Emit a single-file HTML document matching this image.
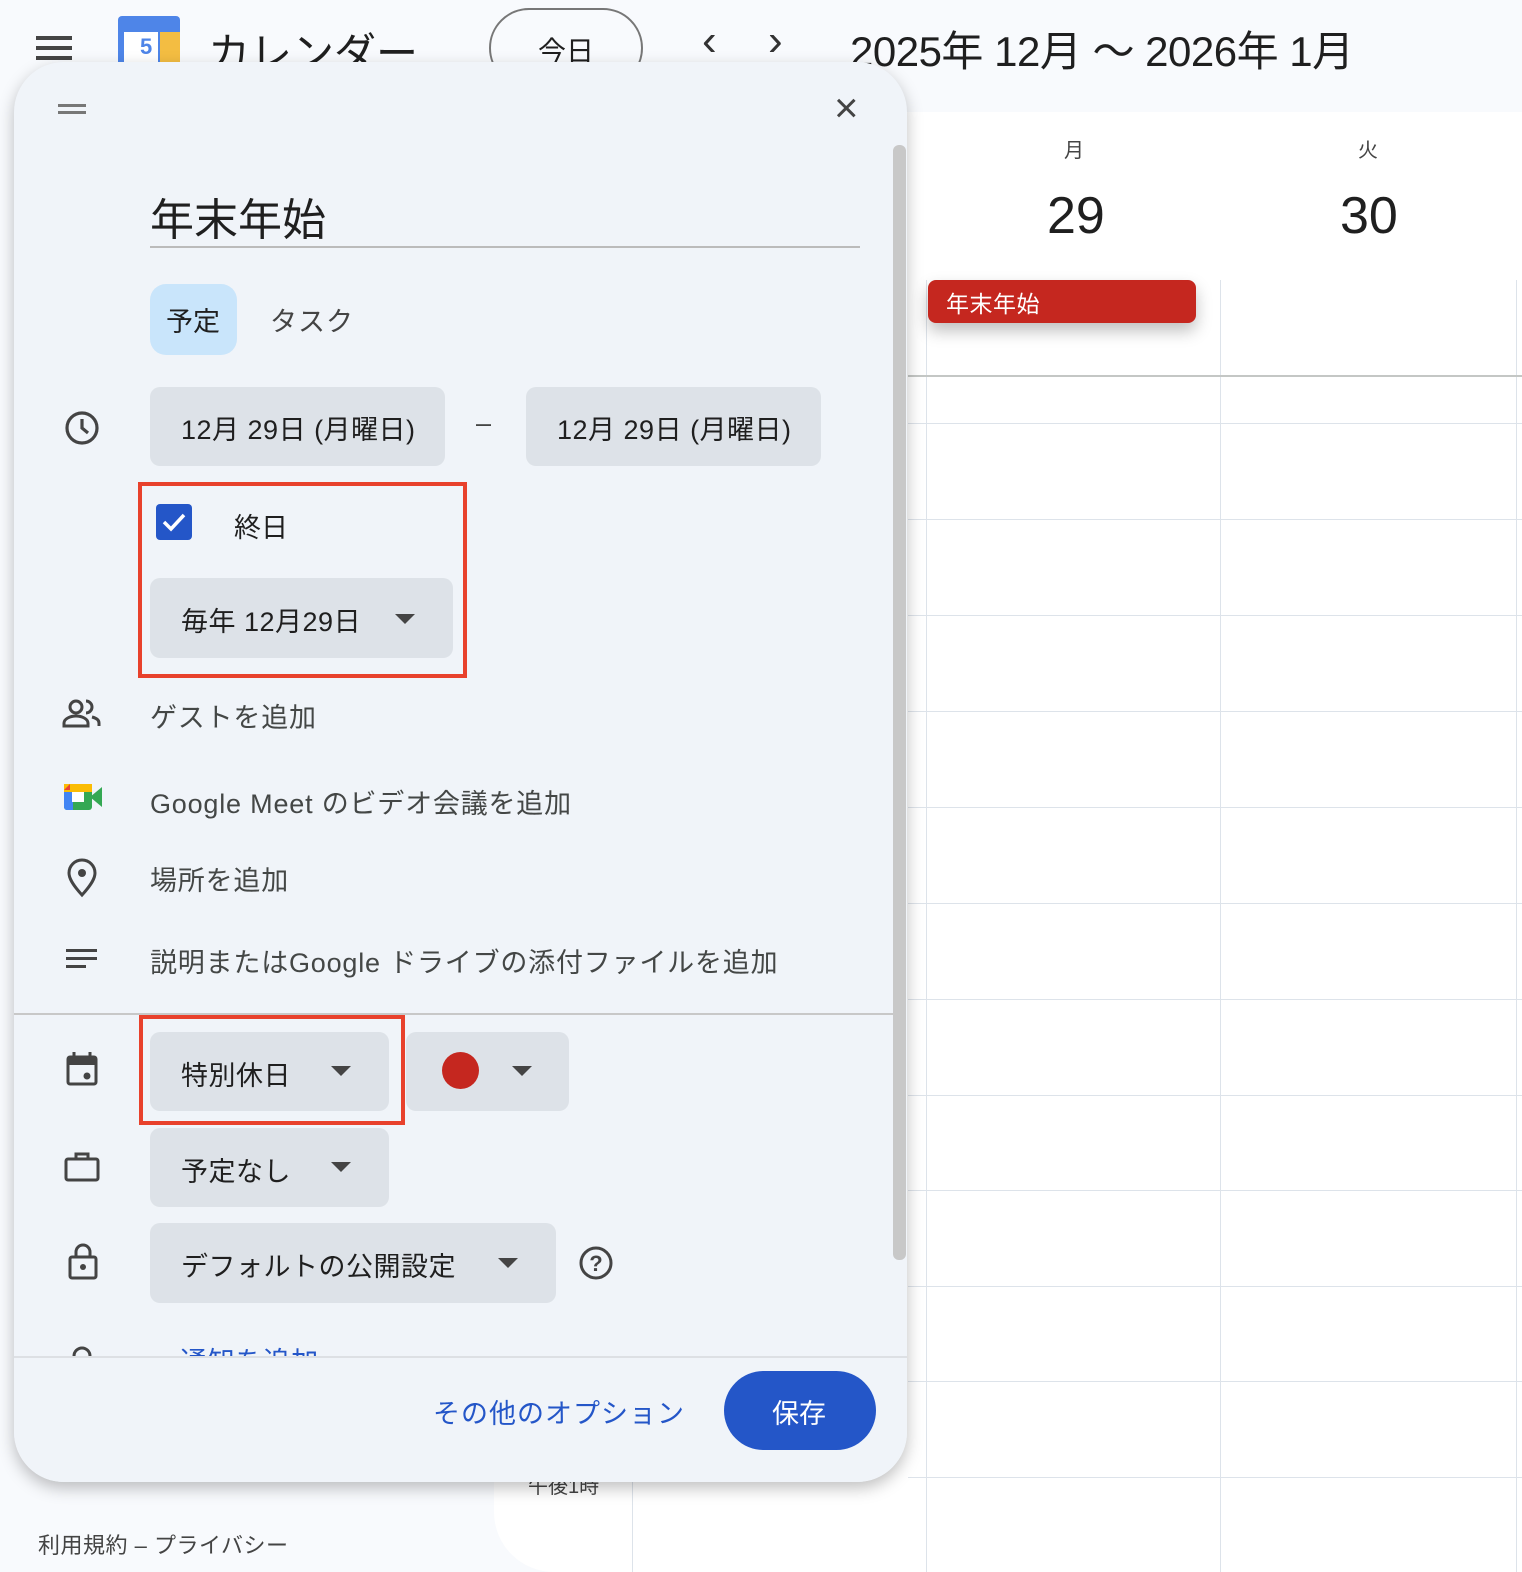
<!DOCTYPE html>
<html><head><meta charset="utf-8"><style>
*{margin:0;padding:0;box-sizing:border-box}
body{width:1522px;height:1572px;position:relative;overflow:hidden;background:#f8fafd;font-family:"Liberation Sans","Noto Sans CJK JP",sans-serif;color:#1f1f1f}
.a{position:absolute}
.t{position:absolute;white-space:nowrap}
.hl{position:absolute;left:908px;width:614px;height:1px;background:#dde3ea}
.vl{position:absolute;top:280px;width:1px;height:1292px;background:#dde3ea}
.chip{position:absolute;background:#dde2e8;border-radius:10px}
.tri{position:absolute;width:0;height:0;border-left:10px solid transparent;border-right:10px solid transparent;border-top:10px solid #444}
.red{position:absolute;border:4px solid #e8412c}
.lbl{position:absolute;white-space:nowrap;font-size:27px;color:#1f1f1f;letter-spacing:.5px}
.gray{font-size:27px;color:#444746;position:absolute;white-space:nowrap;letter-spacing:.8px}
</style></head><body>
<div class="a" style="left:36px;top:36px;width:36px;height:4px;background:#444"></div>
<div class="a" style="left:36px;top:46px;width:36px;height:4px;background:#444"></div>
<div class="a" style="left:36px;top:56px;width:36px;height:4px;background:#444"></div>
<div class="a" style="left:118px;top:16px;width:62px;height:50px;background:#4e85e8;border-radius:4px"></div>
<div class="a" style="left:124px;top:32px;width:34px;height:34px;background:#fff"></div>
<div class="a" style="left:160px;top:32px;width:20px;height:34px;background:#f3bd42"></div>
<div class="t" style="left:140px;top:34px;font-size:22px;color:#4e85e8;font-weight:bold">5</div>
<div class="t" style="left:208px;top:20px;font-size:42px;color:#1f1f1f">カレンダー</div>
<div class="a" style="left:489px;top:8px;width:154px;height:80px;border:2px solid #777;border-radius:40px"></div>
<div class="t" style="left:538px;top:30px;font-size:28px">今日</div>
<div class="t" style="left:702px;top:16px;font-size:44px;color:#333">‹</div>
<div class="t" style="left:768px;top:16px;font-size:44px;color:#333">›</div>
<div class="t" style="left:850px;top:18px;font-size:42px;color:#1f1f1f;letter-spacing:-.5px">2025年 12月 〜 2026年 1月</div>

<div class="a" style="left:494px;top:112px;width:1028px;height:1460px;background:#fff;border-top-left-radius:60px;border-bottom-left-radius:60px"></div>
<div class="t" style="left:1064px;top:134px;font-size:20px;color:#444">月</div>
<div class="t" style="left:1358px;top:134px;font-size:20px;color:#444">火</div>
<div class="t" style="left:1047px;top:186px;font-size:52px;color:#1f1f1f">29</div>
<div class="t" style="left:1340px;top:186px;font-size:52px;color:#1f1f1f">30</div>
<div class="vl" style="left:926px"></div>
<div class="vl" style="left:1220px"></div>
<div class="vl" style="left:1516px"></div>
<div class="a" style="left:632px;top:1470px;width:1px;height:102px;background:#dde3ea"></div>
<div class="a" style="left:908px;top:375px;width:614px;height:2px;background:#c4c7c5"></div>
<div class="hl" style="top:423px"></div><div class="hl" style="top:519px"></div><div class="hl" style="top:615px"></div><div class="hl" style="top:711px"></div><div class="hl" style="top:807px"></div><div class="hl" style="top:903px"></div><div class="hl" style="top:999px"></div><div class="hl" style="top:1095px"></div><div class="hl" style="top:1190px"></div><div class="hl" style="top:1286px"></div><div class="hl" style="top:1381px"></div><div class="hl" style="top:1477px"></div>
<div class="a" style="left:928px;top:280px;width:268px;height:43px;background:#c5271f;border-radius:8px;box-shadow:0 8px 16px rgba(0,0,0,.25)"></div>
<div class="t" style="left:946px;top:285px;font-size:23px;color:#fff;letter-spacing:.5px">年末年始</div>
<div class="t" style="left:528px;top:1470px;font-size:20px;color:#444">午後1時</div>
<div class="t" style="left:38px;top:1528px;font-size:22px;color:#444;letter-spacing:.5px">利用規約 – プライバシー</div>

<div class="a" style="left:14px;top:62px;width:893px;height:1420px;background:#f0f4f9;border-radius:50px;box-shadow:0 6px 16px rgba(0,0,0,.25);overflow:hidden">
  <div class="a" style="left:44px;top:42px;width:28px;height:3px;background:#777"></div>
  <div class="a" style="left:44px;top:49px;width:28px;height:3px;background:#777"></div>
  <div class="t" style="left:820px;top:22px;font-size:42px;color:#444;font-weight:300">×</div>
  <div class="a" style="left:879px;top:83px;width:13px;height:1115px;background:#c8c8c8;border-radius:6px"></div>
  <div class="t" style="left:136px;top:122px;font-size:44px;color:#1f1f1f">年末年始</div>
  <div class="a" style="left:136px;top:184px;width:710px;height:2px;background:#bbb"></div>
  <div class="a" style="left:136px;top:222px;width:87px;height:71px;background:#c9e5fb;border-radius:16px"></div>
  <div class="t" style="left:152px;top:238px;font-size:27px">予定</div>
  <div class="t" style="left:256px;top:238px;font-size:27px;color:#444;letter-spacing:1px">タスク</div>
  <svg class="a" style="left:50px;top:348px" width="36" height="36" viewBox="0 0 36 36"><circle cx="18" cy="18" r="15" fill="none" stroke="#444" stroke-width="3.2"/><path d="M18 9v9l6 5" fill="none" stroke="#444" stroke-width="3.2"/></svg>
  <div class="chip" style="left:136px;top:325px;width:295px;height:79px"></div>
  <div class="lbl" style="left:167px;top:346px">12月 29日 (月曜日)</div>
  <div class="t" style="left:462px;top:346px;font-size:27px;color:#444">–</div>
  <div class="chip" style="left:512px;top:325px;width:295px;height:79px"></div>
  <div class="lbl" style="left:543px;top:346px">12月 29日 (月曜日)</div>
  <div class="red" style="left:124px;top:420px;width:329px;height:196px"></div>
  <div class="a" style="left:142px;top:442px;width:36px;height:36px;background:#2456c8;border-radius:4px"></div>
  <svg class="a" style="left:142px;top:442px" width="36" height="36"><path d="M8 18l7 7 13-14" fill="none" stroke="#fff" stroke-width="3.5"/></svg>
  <div class="t" style="left:220px;top:444px;font-size:27px">終日</div>
  <div class="chip" style="left:136px;top:516px;width:303px;height:80px"></div>
  <div class="lbl" style="left:167px;top:538px">毎年 12月29日</div>
  <div class="tri" style="left:381px;top:552px"></div>
  <svg class="a" style="left:48px;top:636px" width="40" height="32" viewBox="0 0 40 32"><circle cx="14" cy="9" r="6" fill="none" stroke="#444" stroke-width="3"/><path d="M2 28v-3c0-4 6-7 12-7s12 3 12 7v3z" fill="none" stroke="#444" stroke-width="3"/><path d="M24 3a6 6 0 0 1 0 12" fill="none" stroke="#444" stroke-width="3"/><path d="M30 19c4 1 7 3 7 6v3" fill="none" stroke="#444" stroke-width="3"/></svg>
  <div class="gray" style="left:136px;top:634px">ゲストを追加</div>
  <svg class="a" style="left:50px;top:722px" width="38" height="26" viewBox="0 0 38 26"><rect x="0" y="0" width="28" height="26" rx="3" fill="#34a853"/><path d="M0 0h28v8H0z" fill="#fbbc04"/><path d="M0 8h9v18H3a3 3 0 0 1-3-3z" fill="#4285f4"/><path d="M6 0L0 6h6z" fill="#ea4335"/><rect x="8" y="8" width="12" height="10" fill="#fff"/><path d="M26 13l12-10v20z" fill="#34a853"/></svg>
  <div class="gray" style="left:136px;top:720px">Google Meet のビデオ会議を追加</div>
  <svg class="a" style="left:52px;top:796px" width="32" height="40" viewBox="0 0 32 40"><path d="M16 37C6 26 3 20 3 15a13 13 0 0 1 26 0c0 5-3 11-13 22z" fill="none" stroke="#444" stroke-width="3"/><circle cx="16" cy="15" r="4" fill="#444"/></svg>
  <div class="gray" style="left:136px;top:797px">場所を追加</div>
  <div class="a" style="left:52px;top:887px;width:31px;height:3px;background:#444"></div>
  <div class="a" style="left:52px;top:895px;width:31px;height:3px;background:#444"></div>
  <div class="a" style="left:52px;top:903px;width:20px;height:3px;background:#444"></div>
  <div class="gray" style="left:136px;top:879px">説明またはGoogle ドライブの添付ファイルを追加</div>
  <div class="a" style="left:0;top:951px;width:879px;height:2px;background:#c8c8c8"></div>
  <svg class="a" style="left:52px;top:990px" width="32" height="34" viewBox="0 0 32 34"><path d="M8 0v6M24 0v6" stroke="#444" stroke-width="3"/><rect x="2" y="5" width="28" height="27" rx="2" fill="none" stroke="#444" stroke-width="3"/><rect x="2" y="5" width="28" height="8" fill="#444"/><circle cx="21" cy="24" r="3.5" fill="#444"/></svg>
  <div class="red" style="left:125px;top:953px;width:266px;height:110px"></div>
  <div class="chip" style="left:136px;top:970px;width:239px;height:79px"></div>
  <div class="lbl" style="left:167px;top:992px">特別休日</div>
  <div class="tri" style="left:317px;top:1004px"></div>
  <div class="chip" style="left:392px;top:970px;width:163px;height:79px"></div>
  <div class="a" style="left:428px;top:990px;width:37px;height:37px;border-radius:50%;background:#c5271f"></div>
  <div class="tri" style="left:498px;top:1004px"></div>
  <svg class="a" style="left:50px;top:1088px" width="36" height="32" viewBox="0 0 36 32"><rect x="2" y="9" width="32" height="21" rx="2" fill="none" stroke="#444" stroke-width="3"/><path d="M12 9V4h12v5" fill="none" stroke="#444" stroke-width="3"/></svg>
  <div class="chip" style="left:136px;top:1066px;width:239px;height:79px"></div>
  <div class="lbl" style="left:167px;top:1088px">予定なし</div>
  <div class="tri" style="left:317px;top:1100px"></div>
  <svg class="a" style="left:54px;top:1180px" width="30" height="38" viewBox="0 0 30 38"><path d="M8 15V10a7 7 0 0 1 14 0v5" fill="none" stroke="#444" stroke-width="3"/><rect x="2" y="15" width="26" height="21" rx="2" fill="none" stroke="#444" stroke-width="3"/><circle cx="15" cy="25" r="3" fill="#444"/></svg>
  <div class="chip" style="left:136px;top:1161px;width:406px;height:80px"></div>
  <div class="lbl" style="left:167px;top:1183px">デフォルトの公開設定</div>
  <div class="tri" style="left:484px;top:1196px"></div>
  <svg class="a" style="left:564px;top:1183px" width="36" height="36" viewBox="0 0 36 36"><circle cx="18" cy="18" r="15" fill="none" stroke="#444" stroke-width="3"/><text x="18" y="26" text-anchor="middle" font-size="22" font-family="Liberation Sans" fill="#444" font-weight="bold">?</text></svg>
  <div class="t" style="left:166px;top:1278px;font-size:27px;color:#2456c8;letter-spacing:.8px">通知を追加</div>
  <svg class="a" style="left:56px;top:1282px" width="24" height="20"><path d="M4 20v-8a8 8 0 0 1 16 0v8" fill="none" stroke="#444" stroke-width="3"/></svg>
  <div class="a" style="left:0;top:1294px;width:893px;height:126px;background:#f0f4f9;border-top:2px solid #dde0e4"></div>
  <div class="t" style="left:419px;top:1330px;font-size:27px;color:#2456c8;letter-spacing:1px">その他のオプション</div>
  <div class="a" style="left:710px;top:1309px;width:152px;height:79px;background:#2456c8;border-radius:40px"></div>
  <div class="t" style="left:758px;top:1330px;font-size:27px;color:#fff">保存</div>
</div>
</body></html>
